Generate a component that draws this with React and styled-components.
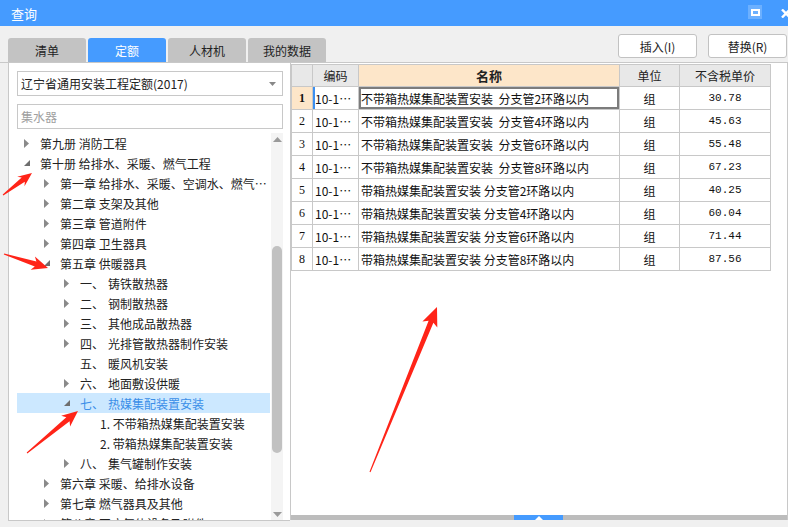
import styled, { createGlobalStyle } from "styled-components";

const GlobalStyle = createGlobalStyle`
  html, body {
    margin: 0;
    padding: 0;
  }
  body {
    font-family: "Noto Sans CJK SC", "Noto Sans", sans-serif;
    font-size: 12px;
    color: #222;
  }
`;

const treeRows = [
  { level: 0, toggle: "closed", label: "第九册 消防工程" },
  { level: 0, toggle: "open", label: "第十册 给排水、采暖、燃气工程" },
  { level: 1, toggle: "closed", label: "第一章 给排水、采暖、空调水、燃气设备及管道" },
  { level: 1, toggle: "closed", label: "第二章 支架及其他" },
  { level: 1, toggle: "closed", label: "第三章 管道附件" },
  { level: 1, toggle: "closed", label: "第四章 卫生器具" },
  { level: 1, toggle: "open", label: "第五章 供暖器具" },
  { level: 2, toggle: "closed", num: "一、", label: "铸铁散热器" },
  { level: 2, toggle: "closed", num: "二、", label: "钢制散热器" },
  { level: 2, toggle: "closed", num: "三、", label: "其他成品散热器" },
  { level: 2, toggle: "closed", num: "四、", label: "光排管散热器制作安装" },
  { level: 2, toggle: null, num: "五、", label: "暖风机安装" },
  { level: 2, toggle: "closed", num: "六、", label: "地面敷设供暖" },
  { level: 2, toggle: "open", num: "七、", label: "热媒集配装置安装", selected: true },
  { level: 3, label: "1. 不带箱热媒集配装置安装" },
  { level: 3, label: "2. 带箱热媒集配装置安装" },
  { level: 2, toggle: "closed", num: "八、", label: "集气罐制作安装" },
  { level: 1, toggle: "closed", label: "第六章 采暖、给排水设备" },
  { level: 1, toggle: "closed", label: "第七章 燃气器具及其他" },
  { level: 1, toggle: "closed", label: "第八章 医疗气体设备及附件" },
];

const quotas = [
  { name: "不带箱热媒集配装置安装  分支管2环路以内", price: "30.78" },
  { name: "不带箱热媒集配装置安装  分支管4环路以内", price: "45.63" },
  { name: "不带箱热媒集配装置安装  分支管6环路以内", price: "55.48" },
  { name: "不带箱热媒集配装置安装  分支管8环路以内", price: "67.23" },
  { name: "带箱热媒集配装置安装 分支管2环路以内", price: "40.25" },
  { name: "带箱热媒集配装置安装 分支管4环路以内", price: "60.04" },
  { name: "带箱热媒集配装置安装 分支管6环路以内", price: "71.44" },
  { name: "带箱热媒集配装置安装 分支管8环路以内", price: "87.56" },
];

const tabs = ["清单", "定额", "人材机", "我的数据"];

// red callout arrows drawn over the screenshot
const arrows = [
  { from: [3, 195], to: [32, 173], head: 11, half: 6 },
  { from: [4, 254], to: [48, 268], head: 13, half: 7 },
  { from: [27, 453], to: [78, 411], head: 13, half: 7 },
  { from: [370, 472], to: [437, 307], head: 16, half: 8 },
];

function arrowPoints({ from, to, head, half }) {
  const [tx, ty] = from;
  const [px, py] = to;
  const len = Math.hypot(px - tx, py - ty);
  const ux = (px - tx) / len;
  const uy = (py - ty) / len;
  const nx = -uy;
  const ny = ux;
  const bx = px - ux * head;
  const by = py - uy * head;
  const wx = bx - ux * 3;
  const wy = by - uy * 3;
  const p = (x, y, k) => `${(x + nx * k).toFixed(1)},${(y + ny * k).toFixed(1)}`;
  return [
    p(tx, ty, 0.5),
    p(bx, by, 2.6),
    p(wx, wy, half),
    `${px},${py}`,
    p(wx, wy, -half),
    p(bx, by, -2.6),
    p(tx, ty, -0.5),
  ].join(" ");
}

function Toggle({ kind }) {
  if (kind === "closed") {
    return (
      <svg width="5" height="9" viewBox="0 0 5 9">
        <polygon points="0,0 5,4.5 0,9" fill="#8a8a8a" />
      </svg>
    );
  }
  if (kind === "open") {
    return (
      <svg width="6" height="6" viewBox="0 0 6 6">
        <polygon points="6,0 6,6 0,6" fill="#6e6e6e" />
      </svg>
    );
  }
  return null;
}

export default function App() {
  return (
    <Window>
      <GlobalStyle />
      <TitleBar>
        <Title>查询</Title>
        <WinControls>
          <MaxButton>
            <span />
          </MaxButton>
          <CloseButton>
            <svg width="12" height="9" viewBox="0 0 12 9">
              <path d="M1 0.5 L9 8.5 M9 0.5 L1 8.5" stroke="#fff" strokeWidth="2.4" />
            </svg>
          </CloseButton>
        </WinControls>
      </TitleBar>

      <Toolbar>
        <Tabs>
          {tabs.map((t, i) => (
            <Tab key={t} $active={i === 1}>
              {t}
            </Tab>
          ))}
        </Tabs>
        <Actions>
          <ActionButton type="button">插入(I)</ActionButton>
          <ActionButton type="button">替换(R)</ActionButton>
        </Actions>
      </Toolbar>

      <Main>
        <LeftPanel>
          <Select>
            <span>辽宁省通用安装工程定额(2017)</span>
            <svg width="7" height="4" viewBox="0 0 7 4">
              <polygon points="0,0 7,0 3.5,4" fill="#888" />
            </svg>
          </Select>
          <SearchBox placeholder="集水器" />
          <TreeArea>
            <TreeList>
              {treeRows.map((r, i) => (
                <TreeRow key={i} $level={r.level} $selected={r.selected}>
                  <ToggleSlot>
                    <Toggle kind={r.toggle} />
                  </ToggleSlot>
                  {r.num && <NumPrefix>{r.num}</NumPrefix>}
                  <TreeLabel>{r.label}</TreeLabel>
                </TreeRow>
              ))}
            </TreeList>
            <VScroll>
              <svg width="9" height="5" viewBox="0 0 9 5">
                <polygon points="0,5 9,5 4.5,0" fill="#9a9a9a" />
              </svg>
              <VTrack>
                <VThumb />
              </VTrack>
              <svg width="9" height="5" viewBox="0 0 9 5">
                <polygon points="0,0 9,0 4.5,5" fill="#9a9a9a" />
              </svg>
            </VScroll>
          </TreeArea>
        </LeftPanel>

        <RightPanel>
          <GridArea>
            <Grid>
              <colgroup>
                <col style={{ width: 21 }} />
                <col style={{ width: 46 }} />
                <col style={{ width: 261 }} />
                <col style={{ width: 60 }} />
                <col style={{ width: 91 }} />
              </colgroup>
              <thead>
                <tr>
                  <HeadCell />
                  <HeadCell>编码</HeadCell>
                  <HeadCell $accent>名称</HeadCell>
                  <HeadCell>单位</HeadCell>
                  <HeadCell>不含税单价</HeadCell>
                </tr>
              </thead>
              <tbody>
                {quotas.map((q, i) => (
                  <tr key={i}>
                    <RowNum $current={i === 0}>{i + 1}</RowNum>
                    <CodeCell $current={i === 0}>10-1…</CodeCell>
                    <NameCell $focused={i === 0}>{q.name}</NameCell>
                    <UnitCell>组</UnitCell>
                    <PriceCell>{q.price}</PriceCell>
                  </tr>
                ))}
              </tbody>
            </Grid>
          </GridArea>
          <HScroll>
            <HThumb>
              <svg width="8" height="4" viewBox="0 0 8 4">
                <polygon points="0,4 8,4 4,0" fill="#fff" />
              </svg>
            </HThumb>
          </HScroll>
        </RightPanel>
      </Main>

      <Annotations width="788" height="527" viewBox="0 0 788 527">
        {arrows.map((a, i) => (
          <polygon key={i} points={arrowPoints(a)} fill="#ff2418" />
        ))}
      </Annotations>
    </Window>
  );
}

const Window = styled.div`
  position: relative;
  width: 788px;
  height: 527px;
  overflow: hidden;
  background: #f0f0f0;
  display: flex;
  flex-direction: column;
`;

const TitleBar = styled.div`
  height: 26px;
  flex: none;
  display: flex;
  align-items: center;
  padding-left: 11px;
  background: #459bff;
  color: #fff;
`;

const Title = styled.div`
  font-size: 13px;
  line-height: 1;
`;

const WinControls = styled.div`
  margin-left: auto;
  margin-right: -5px;
  display: flex;
  align-items: center;
  gap: 19px;
`;

const MaxButton = styled.div`
  width: 14px;
  height: 14px;
  margin-top: -2px;
  background: #6cb0ff;
  display: flex;
  align-items: center;
  justify-content: center;

  span {
    width: 5px;
    height: 3px;
    border: 2px solid #fff;
    box-sizing: content-box;
  }
`;

const CloseButton = styled.div`
  width: 12px;
  height: 9px;
  display: flex;
`;

const Toolbar = styled.div`
  height: 37px;
  flex: none;
  display: flex;
  justify-content: space-between;
  padding: 0 1px 0 8px;
`;

const Tabs = styled.div`
  align-self: flex-end;
  display: flex;
  gap: 2px;
`;

const Tab = styled.div`
  width: 78px;
  height: 25px;
  display: flex;
  align-items: center;
  justify-content: center;
  border-radius: 3px 3px 0 0;
  background: ${(p) => (p.$active ? "#459bff" : "#c3c3c3")};
  color: ${(p) => (p.$active ? "#fff" : "#222")};
  font-size: 12px;
`;

const Actions = styled.div`
  margin-top: 8px;
  display: flex;
  gap: 11px;
`;

const ActionButton = styled.button`
  width: 79px;
  height: 24px;
  padding: 0;
  background: #fff;
  border: 1px solid #c2c2c2;
  border-radius: 3px;
  font-family: "Noto Sans CJK SC", "Noto Sans", sans-serif;
  font-size: 12px;
  color: #222;
`;

const Main = styled.div`
  height: 458px;
  flex: none;
  display: flex;
  border-top: 1px solid #c8c8c8;
  margin-top: -1px;
`;

const LeftPanel = styled.div`
  flex: none;
  width: 266px;
  height: 449px;
  margin-left: 8px;
  padding: 8px 7px 0 8px;
  display: flex;
  flex-direction: column;
  background: #fff;
  border-left: 1px solid #c8c8c8;
  border-bottom: 1px solid #c8c8c8;
`;

const Select = styled.div`
  height: 23px;
  flex: none;
  display: flex;
  align-items: center;
  justify-content: space-between;
  padding: 0 6px 0 3px;
  border: 1px solid #c8c8c8;
  font-size: 12px;
  color: #222;
`;

const SearchBox = styled.input`
  flex: none;
  height: 25px;
  margin-top: 8px;
  padding: 0 3px;
  box-sizing: border-box;
  border: 1px solid #c8c8c8;
  outline: none;
  font-family: "Noto Sans CJK SC", "Noto Sans", sans-serif;
  font-size: 12px;

  &::placeholder {
    color: #a0a0a0;
  }
`;

const TreeArea = styled.div`
  flex: 1;
  min-height: 0;
  margin-top: 4px;
  display: flex;
  overflow: hidden;
`;

const TreeList = styled.div`
  flex: 1;
  min-width: 0;
  overflow: hidden;
`;

const TreeRow = styled.div`
  height: 20px;
  display: flex;
  align-items: center;
  padding-left: ${(p) => p.$level * 20}px;
  margin-right: 1px;
  background: ${(p) => (p.$selected ? "#cce8ff" : "transparent")};
  color: ${(p) => (p.$selected ? "#3a8ee8" : "#222")};
  font-size: 12px;
  white-space: nowrap;
`;

const ToggleSlot = styled.div`
  width: 23px;
  flex: none;
  display: flex;
  align-items: center;
  padding-left: 7px;
  box-sizing: border-box;
`;

const NumPrefix = styled.span`
  width: 28px;
  flex: none;
`;

const TreeLabel = styled.span`
  overflow: hidden;
  text-overflow: ellipsis;
`;

const VScroll = styled.div`
  width: 12px;
  flex: none;
  display: flex;
  flex-direction: column;
  align-items: center;
  padding: 4px 0 3px;
  gap: 3px;
  background: #f4f4f4;
`;

const VTrack = styled.div`
  flex: 1;
  width: 10px;
  padding-top: 101px;
  padding-bottom: 56px;
  box-sizing: border-box;
  display: flex;
`;

const VThumb = styled.div`
  flex: 1;
  border-radius: 5px;
  background: #c1c1c1;
`;

const RightPanel = styled.div`
  flex: 1;
  min-width: 0;
  height: 457px;
  display: flex;
  flex-direction: column;
  background: #fff;
  border-left: 1px solid #c8c8c8;
  border-right: 1px solid #c8c8c8;
`;

const GridArea = styled.div`
  flex: 1;
  padding-top: 1px;
`;

const Grid = styled.table`
  border-collapse: collapse;
  table-layout: fixed;
  width: 479px;
  font-size: 12px;
`;

const HeadCell = styled.th`
  height: 21px;
  padding: 0;
  border: 1px solid #c8c8c8;
  background: ${(p) => (p.$accent ? "#fde6c9" : "#e8e8e8")};
  font-weight: ${(p) => (p.$accent ? 700 : 400)};
  font-size: ${(p) => (p.$accent ? 13 : 12)}px;
  color: #222;
`;

const Cell = styled.td`
  height: 22px;
  padding: 0 2px;
  border: 1px solid #c8c8c8;
  white-space: nowrap;
  overflow: hidden;
  text-overflow: ellipsis;
  color: #111;
`;

const RowNum = styled(Cell)`
  text-align: center;
  font-family: "Liberation Serif", serif;
  font-size: 12px;
  font-weight: ${(p) => (p.$current ? 700 : 400)};
  background: ${(p) => (p.$current ? "#fde6c9" : "#fff")};
`;

const CodeCell = styled(Cell)`
  box-shadow: ${(p) => (p.$current ? "inset 2px 0 0 #3b8ff0" : "none")};
`;

const NameCell = styled(Cell)`
  box-shadow: ${(p) => (p.$focused ? "inset 0 0 0 2px #7c7c7c" : "none")};
  white-space: pre;
`;

const UnitCell = styled(Cell)`
  text-align: center;
`;

const PriceCell = styled(Cell)`
  text-align: center;
  font-family: "Liberation Mono", monospace;
  font-size: 11px;
`;

const HScroll = styled.div`
  height: 5px;
  flex: none;
  background: #bcbcbc;
  display: flex;
  padding-left: 223px;
`;

const HThumb = styled.div`
  width: 49px;
  background: #459bff;
  display: flex;
  align-items: center;
  justify-content: center;
`;

const Annotations = styled.svg`
  position: absolute;
  left: 0;
  top: 0;
  pointer-events: none;
`;
